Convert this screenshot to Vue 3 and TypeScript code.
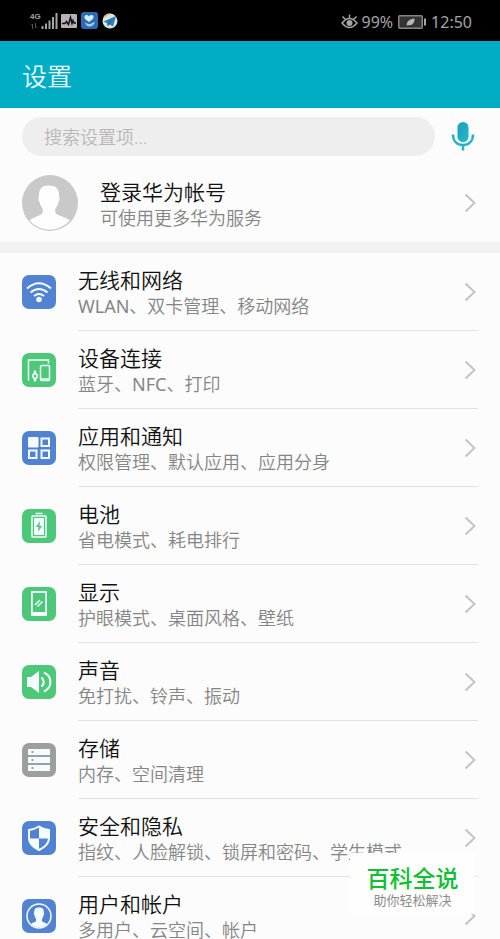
<script setup lang="ts">
import { ref } from 'vue'

type IconName = 'wifi' | 'devices' | 'apps' | 'battery' | 'display' | 'sound' | 'storage' | 'security' | 'users'
type Tone = 'blue' | 'green' | 'gray'

interface SettingItem {
  icon: IconName
  tone: Tone
  title: string
  summary: string
}

const query = ref('')

const items: SettingItem[] = [
  { icon: 'wifi', tone: 'blue', title: '无线和网络', summary: 'WLAN、双卡管理、移动网络' },
  { icon: 'devices', tone: 'green', title: '设备连接', summary: '蓝牙、NFC、打印' },
  { icon: 'apps', tone: 'blue', title: '应用和通知', summary: '权限管理、默认应用、应用分身' },
  { icon: 'battery', tone: 'green', title: '电池', summary: '省电模式、耗电排行' },
  { icon: 'display', tone: 'green', title: '显示', summary: '护眼模式、桌面风格、壁纸' },
  { icon: 'sound', tone: 'green', title: '声音', summary: '免打扰、铃声、振动' },
  { icon: 'storage', tone: 'gray', title: '存储', summary: '内存、空间清理' },
  { icon: 'security', tone: 'blue', title: '安全和隐私', summary: '指纹、人脸解锁、锁屏和密码、学生模式' },
  { icon: 'users', tone: 'blue', title: '用户和帐户', summary: '多用户、云空间、帐户' },
]
</script>

<template>
  <div class="screen">
    <div class="status">
      <div class="status-group">
        <span class="network">
          <span class="network-type">4G</span>
          <svg class="network-arrows" viewBox="0 0 8 6" aria-hidden="true">
            <path d="M2.5 6V1M1 2.5 2.5 1M5.5 0v5M7 3.500 5.500 5" />
          </svg>
        </span>
        <svg class="signal" viewBox="0 0 17 16" aria-hidden="true">
          <path d="M1.500 13v3M5 10.500V16M8.500 7.500V16M12 4v12M15.500 0v16" />
        </svg>
        <svg class="app-pulse" viewBox="0 0 16 14" aria-hidden="true">
          <rect width="16" height="14" rx="1" fill="#b9b3b8" />
          <path d="M1 9.500h3l1.500-2 2 3 2-7 1.500 6 1-3 1 2.500h2" fill="none" stroke="#151217" stroke-width="1.500" />
        </svg>
        <svg class="app-heart" viewBox="0 0 17 17" aria-hidden="true">
          <rect width="17" height="17" rx="3" fill="#2c6cb5" />
          <path d="M8 10C5 8 3 6.500 3.500 4.500 4 2.500 7 2.500 8 4.500c1-2 4-2 4.500 0C13 6.500 11 8 8 10z" fill="#d6edf5" />
          <path d="M4 10.500c2 .5 3 2 5 1.500 2-.5 3-2 5-2-1 3-3 4.500-5.500 4.500S5 13 4 10.500z" fill="#9bd0e8" />
        </svg>
        <svg class="app-plane" viewBox="0 0 16 16" aria-hidden="true">
          <circle cx="8" cy="8" r="7.500" fill="#d9e6e3" />
          <path d="M1 5A7.500 7.500 0 0 1 9 .6L5 3z" fill="#d6c75a" />
          <path d="M1.500 8.500 14 3l-3 10.500-3.500-2-2 2-.5-3.500z" fill="#2f7fb5" />
          <path d="m6 10 5-4-3.500 5-1.500 1.500z" fill="#1f669e" />
        </svg>
      </div>
      <div class="status-group status-right">
        <svg class="eye" viewBox="0 0 17 15" aria-hidden="true">
          <path d="M1 9q7.500-9 15 0-7.500 9-15 0zM8.500 4.500V.5M4.500 5.500 1.500 2.500M12.500 5.500l3-3" fill="none" stroke="#a5a5a5" stroke-width="1.500" />
          <circle cx="8.500" cy="9" r="3" fill="#a5a5a5" />
        </svg>
        <span>99%</span>
        <svg class="charge" viewBox="0 0 28 14" aria-hidden="true">
          <rect x=".75" y=".75" width="23.500" height="12.500" rx="1" fill="#333" stroke="#858585" stroke-width="1.500" />
          <rect x="26" y="3.500" width="2" height="7" fill="#a5a5a5" />
          <path d="M9 11c-1-4 2-7 7.500-7.500C17 8 14 11 10 10z" fill="#b5b5b5" />
        </svg>
        <span class="time">12:50</span>
      </div>
    </div>

    <header class="header"><h1>设置</h1></header>

    <form class="search" role="search" @submit.prevent>
      <input v-model="query" type="search" placeholder="搜索设置项..." aria-label="搜索设置项" />
      <button type="button" aria-label="语音搜索">
        <svg viewBox="0 0 24 30" aria-hidden="true">
          <defs>
            <linearGradient id="mic-fill" x1="0" y1="0" x2="1" y2="1">
              <stop offset="0" stop-color="#1b9fbb" />
              <stop offset="1" stop-color="#22b9cf" />
            </linearGradient>
          </defs>
          <rect x="6.500" y="0" width="11" height="20" rx="5.500" fill="url(#mic-fill)" />
          <path d="M2 12.500c0 6.500 4 10.500 10 10.500s10-4 10-10.500M12 23v5.500" fill="none" stroke="#25b1c9" stroke-width="2.500" />
        </svg>
      </button>
    </form>

    <a class="account" href="#account">
      <svg class="avatar" viewBox="0 0 56 56" aria-hidden="true">
        <circle cx="28" cy="28" r="28" fill="#c9c9c9" />
        <path d="M7.500 45.500c3-3 10-4.500 12.500-7 1.500-1.500 1-4 0-6-1.500-1.500-2-3.500-2.300-5.500-1.600-1-1.700-4-.7-5.500C16.500 14 20 10.500 27 10.500S37.500 14 37 21.500c1 1.500.9 4.500-.7 5.500-.3 2-.8 4-2.300 5.500-1 2-1.500 4.500 0 6 2.500 2.500 11 4 14 7A27 27 0 0 1 7.500 45.500z" fill="#fefefe" />
      </svg>
      <span class="text">
        <span class="title">登录华为帐号</span>
        <span class="summary">可使用更多华为服务</span>
      </span>
      <svg class="chevron" viewBox="0 0 12 20" aria-hidden="true"><path d="m1.500 1.500 9 8.500-9 8.500" /></svg>
    </a>

    <ul class="list">
      <li v-for="item in items" :key="item.icon">
        <a class="item" :href="`#${item.icon}`">
          <svg class="icon" :class="item.tone" viewBox="0 0 34 34" aria-hidden="true">
            <rect class="tile" width="34" height="34" rx="7" />
            <g v-if="item.icon === 'wifi'">
              <path class="line" d="M5 13.500q12-10.500 24 0M8.500 17.500q8.500-7 17 0M12 21q5-4 10 0" />
              <circle class="solid" cx="17" cy="24.500" r="2.750" />
            </g>
            <g v-else-if="item.icon === 'devices'">
              <path class="thin" d="M6.500 27.500V7h20v3.500" />
              <rect class="thin" x="18.500" y="12.500" width="9" height="15" rx="1" />
              <path class="thin" d="M18.500 26h9" />
              <circle class="thin" cx="13" cy="23" r="2.250" />
              <path class="solid" d="m11.500 20.500.5-3h2l.5 3zM11.500 25.500l.5 3h2l.5-3z" />
            </g>
            <g v-else-if="item.icon === 'apps'">
              <rect class="solid" x="6" y="6" width="10.500" height="10.500" rx="1" />
              <rect class="line" x="19.500" y="7.500" width="7.500" height="7.500" />
              <rect class="line" x="7" y="19.500" width="7.500" height="7.500" />
              <rect class="line" x="19.500" y="19.500" width="7.500" height="7.500" />
            </g>
            <g v-else-if="item.icon === 'battery'">
              <path class="thin" d="M13.500 4.500h7" />
              <rect class="thin" x="10" y="7" width="14" height="21" rx=".5" />
              <rect class="solid" x="12" y="9" width="10" height="17" />
              <path class="cut" d="m18 12-4 6h2.500L16 23l4-6h-2.500z" />
            </g>
            <g v-else-if="item.icon === 'display'">
              <path class="solid" fill-rule="evenodd" d="M10 4h14a1 1 0 0 1 1 1v23a1 1 0 0 1-1 1H10a1 1 0 0 1-1-1V5a1 1 0 0 1 1-1zm.750 2v19h12.500V6z" />
              <path class="thin" d="m13 18 5-5M15.500 19.500l5-5" />
            </g>
            <g v-else-if="item.icon === 'sound'">
              <path class="solid" d="M5 12h4l8-6v22l-8-6H5z" />
              <path class="line" d="M19.500 12.500q4.500 4.500 0 9M22 7.500c8.500 4 8.500 15 0 19" />
            </g>
            <g v-else-if="item.icon === 'storage'">
              <rect class="solid" x="6" y="6" width="22" height="6" rx=".5" />
              <rect class="solid" x="6" y="14" width="22" height="6" rx=".5" />
              <rect class="solid" x="6" y="22" width="22" height="6" rx=".5" />
              <path class="cut" d="M9.500 8h2v2h-2zM9.500 16h2v2h-2zM9.500 24h2v2h-2z" />
            </g>
            <g v-else-if="item.icon === 'security'">
              <path class="line" d="M17 5.500Q12 8.500 7 9v8c0 6 4.500 9.500 10 12 5.500-2.500 10-6 10-12V9q-5-.5-10-3.500z" />
              <path class="solid" d="M17 5.500q5 3 10 3.500v8.500H17zM7 17.500h10V29C11.500 26.500 7 23 7 17.500z" />
            </g>
            <g v-else>
              <circle class="thin" cx="17" cy="17" r="12" />
              <path class="solid" d="M9 25c1.500-1.500 4-1.500 5-3 .5-1 0-2-.5-3-.8-1-1-2-1-3-.8-.8-.8-2-.3-2.800C12 9.800 14 8.500 17 8.500s5 1.300 4.800 4.700c.5.8.5 2-.3 2.800 0 1-.2 2-1 3-.5 1-1 2-.5 3 1 1.500 3.500 1.500 5 3a11.300 11.300 0 0 1-16 0z" />
            </g>
          </svg>
          <span class="text">
            <span class="title">{{ item.title }}</span>
            <span class="summary">{{ item.summary }}</span>
          </span>
          <svg class="chevron" viewBox="0 0 12 20" aria-hidden="true"><path d="m1.500 1.500 9 8.500-9 8.500" /></svg>
        </a>
      </li>
    </ul>

    <aside class="badge">
      <strong>百科全说</strong>
      <span>助你轻松解决</span>
    </aside>
  </div>
</template>

<style>
body {
  margin: 0;
}
</style>

<style scoped>
.screen {
  position: relative;
  height: 100vh;
  overflow: hidden;
  background: #fcfcfc;
  font-family: "Noto Sans", "Noto Sans CJK SC", sans-serif;
}

.status {
  display: flex;
  align-items: center;
  justify-content: space-between;
  box-sizing: border-box;
  height: 41px;
  padding: 0 28px 0 30px;
  background: #000;
  color: #a5a5a5;
  font-size: 16px;
  line-height: 20px;
}

.status-group {
  display: flex;
  align-items: center;
}

.status-right {
  gap: 3px;
  padding-top: 2px;
}

.network {
  display: flex;
  flex-direction: column;
  gap: 2px;
}

.network-type {
  font: bold 8px/8px "Liberation Sans", sans-serif;
}

.network-arrows {
  width: 8px;
  height: 6px;
  fill: none;
  stroke: #555;
}

.signal {
  width: 17px;
  height: 16px;
  fill: none;
  stroke: #a5a5a5;
  stroke-width: 2;
}

.app-pulse {
  width: 16px;
  height: 14px;
  margin-left: 3px;
}

.app-heart {
  width: 17px;
  height: 17px;
  margin-left: 4px;
}

.app-plane {
  width: 16px;
  height: 16px;
  margin-left: 4px;
}

.eye {
  width: 17px;
  height: 15px;
}

.charge {
  width: 28px;
  height: 14px;
  margin-left: 2px;
}

.time {
  margin-left: 2px;
}

.header {
  display: flex;
  align-items: center;
  box-sizing: border-box;
  height: 67px;
  padding: 2px 22px 0;
  background: #00adc5;
}

.header h1 {
  margin: 0;
  color: #e9fbfc;
  font-size: 25px;
  font-weight: 350;
  line-height: 32px;
}

.search {
  display: flex;
  align-items: center;
  gap: 16px;
  padding: 9px 25px 0 22px;
}

.search input {
  flex: 1;
  box-sizing: border-box;
  min-width: 0;
  height: 39px;
  padding: 0 22px;
  border: 0;
  border-radius: 20px;
  background: #eee;
  color: #222;
  font: 350 18px/26px "Noto Sans", "Noto Sans CJK SC", sans-serif;
  appearance: none;
}

.search input::placeholder {
  color: #b7b7b7;
}

.search button {
  width: 24px;
  height: 30px;
  padding: 0;
  border: 0;
  background: none;
}

.search button svg {
  display: block;
  width: 24px;
  height: 30px;
}

.account,
.item {
  display: flex;
  align-items: center;
  gap: 22px;
  padding-left: 22px;
  color: inherit;
  text-decoration: none;
}

.account {
  padding-top: 19px;
  padding-bottom: 11px;
  border-bottom: 11px solid #f2f2f2;
}

.avatar {
  flex: none;
  width: 56px;
  height: 56px;
}

.text {
  flex: 1;
  display: flex;
  flex-direction: column;
  min-width: 0;
  padding: 14px 0 11px;
  white-space: nowrap;
}

.account .text {
  padding: 4px 0 0;
}

.title {
  color: #111;
  font-size: 21px;
  font-weight: 350;
  line-height: 26px;
}

.summary {
  color: #858585;
  font-family: "Noto Sans", "Noto Sans CJK SC DemiLight", "Noto Sans CJK SC", sans-serif;
  font-size: 18px;
  font-weight: 400;
  line-height: 26px;
}

.chevron {
  flex: none;
  width: 12px;
  height: 20px;
  margin-right: 24px;
  fill: none;
  stroke: #c4c4c4;
  stroke-width: 2;
}

.list {
  margin: 0;
  padding: 0;
  list-style: none;
}

.list li::after {
  content: "";
  display: block;
  height: 1px;
  margin: 0 22px 0 78px;
  background: #e2e2e2;
}

.icon {
  flex: none;
  width: 34px;
  height: 34px;
}

.blue {
  color: #5282d2;
}

.green {
  color: #4cc878;
}

.gray {
  color: #9e9e9e;
}

.tile,
.cut {
  fill: currentColor;
}

.solid {
  fill: #f5fcff;
}

.line,
.thin {
  fill: none;
  stroke: #f5fcff;
  stroke-width: 2;
}

.thin {
  stroke-width: 1.5;
}

.badge {
  position: absolute;
  right: 25px;
  bottom: 25px;
  display: flex;
  flex-direction: column;
  align-items: center;
  box-sizing: border-box;
  width: 125px;
  padding: 12px 0 5px;
  background: #fefefe;
}

.badge strong {
  color: #0fc032;
  font-size: 23px;
  font-weight: 500;
  line-height: 26px;
}

.badge span {
  color: #8c8c8c;
  font-size: 13px;
  line-height: 18px;
}
</style>
